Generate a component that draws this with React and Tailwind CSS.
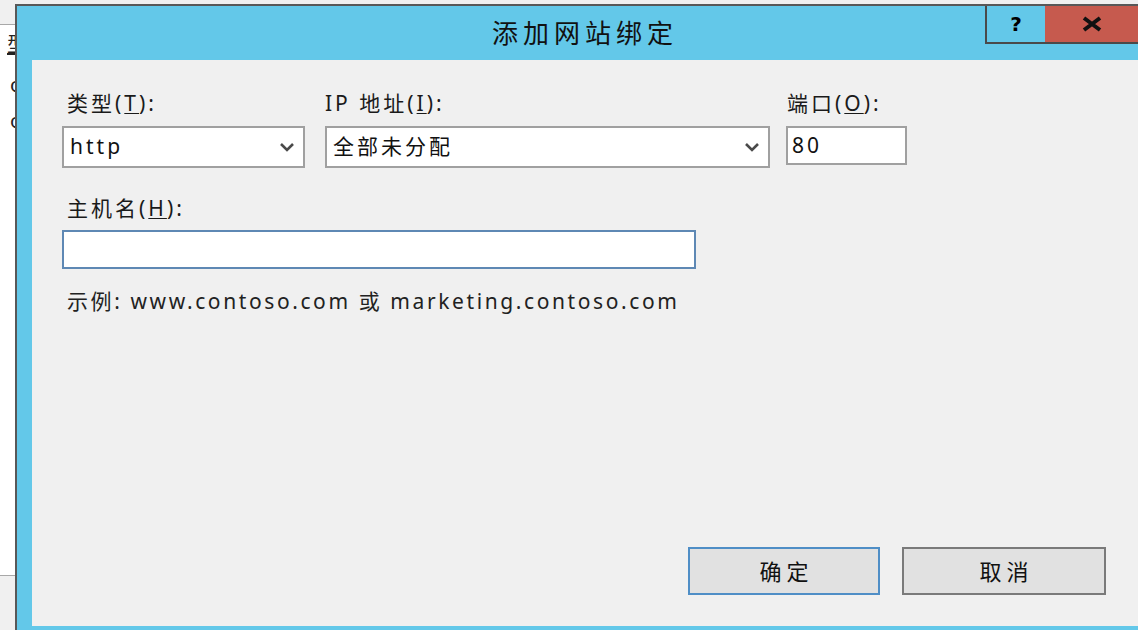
import { useState } from "react";

const font = {
  fontFamily: '"Noto Sans", "Noto Sans CJK SC", sans-serif',
};

function Key({ children }) {
  return <span className="underline underline-offset-2 decoration-1">{children}</span>;
}

function Chevron() {
  return (
    <svg width="16" height="10" viewBox="0 0 16 10" className="shrink-0">
      <polyline
        points="2,2 8,8 14,2"
        fill="none"
        stroke="#4a4a4a"
        strokeWidth="2.6"
      />
    </svg>
  );
}

function Combo({ value, width }) {
  return (
    <div
      className={`h-[42px] ${width} flex items-center justify-between bg-white border-2 border-[#a0a0a0] pl-[6px] pr-[8px] text-[21px] tracking-[3px] text-[#111]`}
    >
      <span>{value}</span>
      <Chevron />
    </div>
  );
}

function BackWindow() {
  return (
    <div className="w-[15px] shrink-0 flex flex-col bg-[#f0f0f0] overflow-hidden">
      <div className="h-[25px] border-b border-[#a8a8a8]" />
      <div className="flex-1 bg-white flex flex-col items-end text-[20px] leading-none text-[#222]">
        <div className="mt-[10px] whitespace-nowrap mr-[-12px] underline">型</div>
        <div className="mt-[20px] whitespace-nowrap mr-[-7px]">o</div>
        <div className="mt-[16px] whitespace-nowrap mr-[-7px]">o</div>
      </div>
      <div className="h-[55px] border-t border-[#a8a8a8]" />
    </div>
  );
}

export default function App() {
  const [host, setHost] = useState("");

  return (
    <div
      className="w-[1138px] h-[630px] flex bg-[#f0f0f0] overflow-hidden"
      style={font}
    >
      <BackWindow />

      <div className="flex-1 mt-[4px] border-l-2 border-t-2 border-[#585858] bg-[#63c8e9] flex flex-col">
        {/* title bar */}
        <div className="h-[54px] flex items-start shrink-0">
          <div className="flex-1 h-[40px] flex items-end justify-center pl-[168px]">
            <span className="text-[26px] leading-none text-[#111] tracking-[5px]">
              添加网站绑定
            </span>
          </div>
          <div className="w-[60px] h-[38px] border-l-2 border-b-2 border-[#4a4a4a] flex items-center justify-center">
            <span
              className="text-[20px] font-bold text-black leading-none"
              style={{ fontFamily: '"DejaVu Sans", sans-serif' }}
            >
              ?
            </span>
          </div>
          <div className="w-[93px] h-[38px] bg-[#c65a4e] border-b-2 border-[#4a4a4a] flex items-center justify-center">
            <svg width="22" height="16" viewBox="0 0 22 16">
              <path d="M3 2 L19 14 M19 2 L3 14" stroke="#111" strokeWidth="4" />
            </svg>
          </div>
        </div>

        {/* content */}
        <div className="flex-1 ml-[15px] mb-[4px] bg-[#f0f0f0] flex flex-col pl-[30px] pr-[32px] pt-[30px] pb-[31px] text-[#1a1a1a]">
          <div className="flex items-start">
            <div className="w-[243px] flex flex-col">
              <div className="ml-[5px] text-[21px] tracking-[3px] leading-[26px] h-[26px]">
                类型(<Key>T</Key>):
              </div>
              <div className="mt-[10px]">
                <Combo value="http" width="w-[243px]" />
              </div>
            </div>
            <div className="w-[445px] ml-[20px] flex flex-col">
              <div className="text-[21px] tracking-[3px] leading-[26px] h-[26px]">
                IP 地址(<Key>I</Key>):
              </div>
              <div className="mt-[10px]">
                <Combo value="全部未分配" width="w-[445px]" />
              </div>
            </div>
            <div className="w-[121px] ml-[16px] flex flex-col">
              <div className="ml-[1px] text-[21px] tracking-[3px] leading-[26px] h-[26px]">
                端口(<Key>O</Key>):
              </div>
              <div className="mt-[10px] h-[39px] bg-white border-2 border-[#a0a0a0] flex items-center pl-[4px] text-[21px] tracking-[3px] text-[#111]">
                80
              </div>
            </div>
          </div>

          <div className="ml-[5px] mt-[27px] text-[21px] tracking-[3px] leading-[26px] h-[26px]">
            主机名(<Key>H</Key>):
          </div>
          <input
            value={host}
            onChange={(e) => setHost(e.target.value)}
            className="mt-[9px] w-[634px] h-[39px] bg-white border-2 border-[#5e88b4] outline-none px-[4px] text-[21px]"
          />
          <div className="ml-[5px] mt-[19px] text-[21px] tracking-[2.6px] leading-[26px] whitespace-nowrap text-[#222]">
            示例: www.contoso.com 或 marketing.contoso.com
          </div>

          <div className="mt-auto flex justify-end gap-[22px]">
            <button className="w-[192px] h-[48px] bg-[#e1e1e1] border-2 border-[#4f8ec6] text-[22px] tracking-[5px] pl-[5px] text-[#111]">
              确定
            </button>
            <button className="w-[204px] h-[48px] bg-[#e1e1e1] border-2 border-[#7a7a7a] text-[22px] tracking-[5px] pl-[5px] text-[#111]">
              取消
            </button>
          </div>
        </div>
      </div>
    </div>
  );
}
